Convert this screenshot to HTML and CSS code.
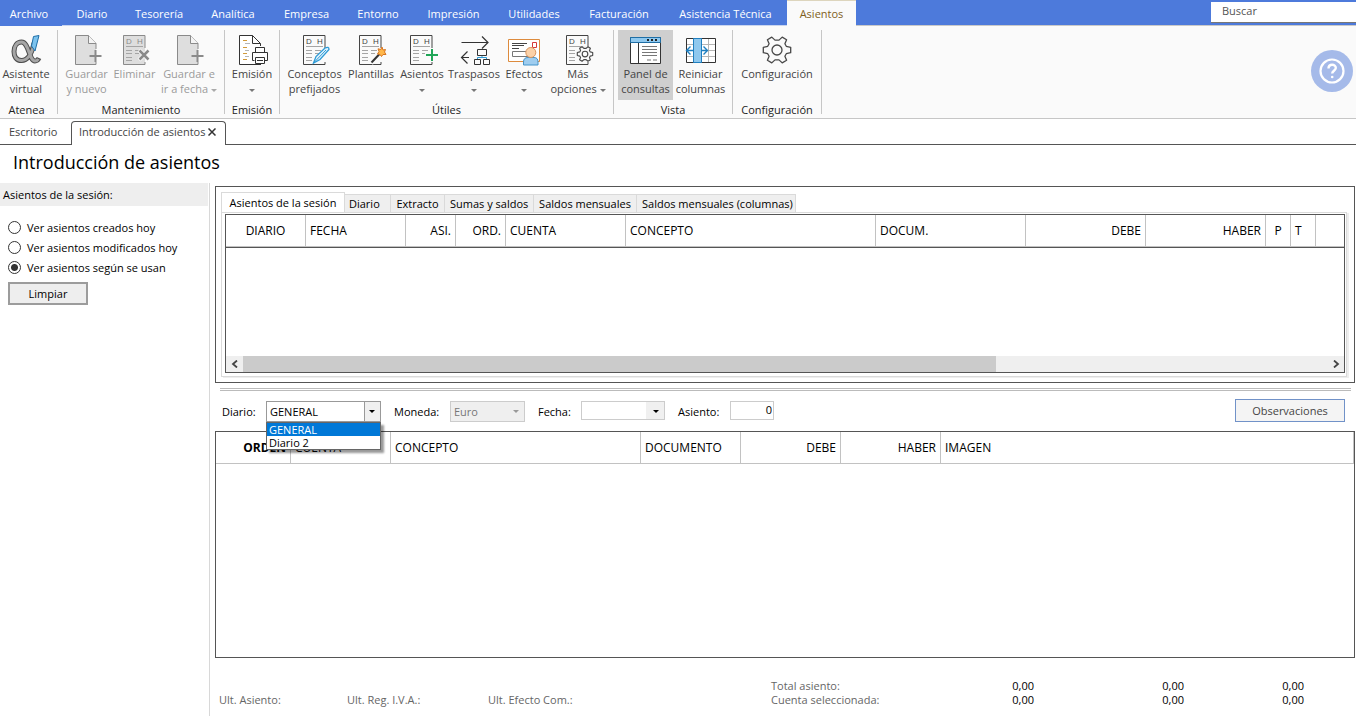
FILE: index.html
```html
<!DOCTYPE html>
<html lang="es">
<head>
<meta charset="utf-8">
<title>Introducción de asientos</title>
<link rel="stylesheet" href="styles.css">
</head>
<body>
<svg class="defs" aria-hidden="true">
  <symbol id="sheet" viewBox="0 0 32 32">
    <path d="M25 15V9.500L17.500 1.500H4.500V30.500H25V28" fill="#dedede" stroke="#8a8a8a"/>
    <path d="M17.500 1.500V9.500H25" fill="#f4f4f4" stroke="#8a8a8a"/>
    <path d="M24.500 16V28M18.500 22H30.500" stroke="#8a8a8a" stroke-width="2"/>
  </symbol>
  <symbol id="ledger" viewBox="0 0 32 32">
    <path d="M26 14V1.500H4.500V30.500H26V28" fill="none" stroke="currentColor"/>
    <text x="7" y="10" class="ledger-text">D</text>
    <text x="18" y="10" class="ledger-text">H</text>
    <path d="M7 12.500H24M7 16.500H13M7 19.500H13M7 23.500H13M7 26.500H13M16 16.500H22M16 19.500H20" fill="none" stroke="#a5a5a5"/>
  </symbol>
  <symbol id="gear" viewBox="-16 -16 32 32">
    <path d="M9.300 3.700L7.900 6.200L9.600 10.200L5.200 12.900L2 9.900H-2L-5.200 12.900L-9.600 10.200L-7.900 6.200L-9.300 3.700L-13.700 2.700V-2.700L-9.300 -3.700L-7.900 -6.200L-9.600 -10.200L-5.200 -12.900L-2 -9.900H2L5.200 -12.900L9.600 -10.200L7.900 -6.200L9.300 -3.700L13.700 -2.700V2.700Z" fill="#fafafa" stroke="#484848" stroke-linejoin="round"/>
    <circle r="5" fill="none" stroke="#484848"/>
  </symbol>
</svg>

<nav class="menu">
  <a class="menu-item file" href="#">Archivo</a>
  <a class="menu-item" href="#">Diario</a>
  <a class="menu-item" href="#">Tesorería</a>
  <a class="menu-item" href="#">Analítica</a>
  <a class="menu-item" href="#">Empresa</a>
  <a class="menu-item" href="#">Entorno</a>
  <a class="menu-item" href="#">Impresión</a>
  <a class="menu-item" href="#">Utilidades</a>
  <a class="menu-item" href="#">Facturación</a>
  <a class="menu-item" href="#">Asistencia Técnica</a>
  <a class="menu-item active" href="#">Asientos</a>
  <div class="search"><input type="text" placeholder="Buscar" aria-label="Buscar"></div>
</nav>

<header class="ribbon">
  <section class="group g-atenea">
    <div class="tools">
      <button class="tool" type="button">
        <svg viewBox="0 0 32 32"><path d="M24 9C22 19 18 26.500 11.500 26.500C6 26.500 4 22 4 17.500C4 12 7 8 11.500 8C19 8 19 27 25 27C27 27 28 26 29 24" fill="none" stroke="#4e4e4e" stroke-width="5"/><path d="M24 9.800C22 19 18 26.500 11.500 26.500C6 26.500 4 22 4 17.500C4 12 7 8 11.500 8C19 8 19 27 25 27C27 27 27.800 26 28.400 25" fill="none" stroke="#a6a6a6" stroke-width="3"/><path d="M23.500 2.500L29 1.500L25 17L21.500 12Z" fill="#7cc3ee" stroke="#1e6fa8"/></svg>
        <span>Asistente<br>virtual</span></button>
    </div>
    <h2>Atenea</h2>
  </section>
  <section class="group g-mant">
    <div class="tools">
      <button class="tool" type="button" disabled><svg><use href="#sheet"/></svg><span>Guardar<br>y nuevo</span></button>
      <button class="tool" type="button" disabled><svg viewBox="0 0 32 32"><path d="M4 1H26V30H4Z" fill="#dedede"/><use href="#ledger" width="32" height="32"/><path d="M20 16L30 26M30 16L20 26" stroke="#fafafa" stroke-width="4"/><path d="M20.500 16.500L29.500 25.500M29.500 16.500L20.500 25.500" stroke="#8a8a8a" stroke-width="2.500"/></svg><span>Eliminar</span></button>
      <button class="tool" type="button" disabled><svg><use href="#sheet"/></svg><span>Guardar e<br>ir a fecha <i class="caret"></i></span></button>
    </div>
    <h2>Mantenimiento</h2>
  </section>
  <section class="group g-emision">
    <div class="tools">
      <button class="tool" type="button"><svg viewBox="0 0 32 32"><path d="M24.500 12V9.500L16.500 1.500H3.500V30.500H25" fill="#fff" stroke="#333"/><path d="M16.500 1.500V9.500H24.500" fill="none" stroke="#333"/><path d="M7 6.500H11M7 13.500H11M7 19.500H11M7 25.500H11" stroke="#d29a3a"/><path d="M9 9.500H14M9 16.500H13M9 22.500H13" stroke="#b5b5b5"/><path d="M19.500 18.500V13.500H28.500V18.500M18.500 26.500H16.500V18.500H31.500V26.500H28.500M19.500 23.500H28.500V29.500H19.500Z" fill="#fff" stroke="#333"/><path d="M21 26.500H27" stroke="#333"/></svg><span>Emisión<br><i class="caret"></i></span></button>
    </div>
    <h2>Emisión</h2>
  </section>
  <section class="group g-utiles">
    <div class="tools">
      <button class="tool" type="button"><svg viewBox="0 0 32 32"><use href="#ledger" width="32" height="32"/><path d="M14.500 29L17 22.500L26 14Q30 12 30 15.500L21 25.500Z" fill="#e2f3fd" stroke="#2e9bd6" stroke-width="1.300"/><path d="M14.500 29L27 16" stroke="#2e9bd6"/></svg><span>Conceptos<br>prefijados</span></button>
      <button class="tool" type="button"><svg viewBox="0 0 32 32"><use href="#ledger" width="32" height="32"/><path d="M16 29L25 19" stroke="#fafafa" stroke-width="5"/><path d="M16.500 28.500L25 19.500" stroke="#333" stroke-width="2"/><path d="M27 13L28 16L30.500 15.500L29.500 18L31 20.500L28 20.500L26.500 22.500L25 20.500L22.500 20L24 17.500L23 14.800L25.800 15.500Z" fill="#ffb74a" stroke="#d87520"/></svg><span>Plantillas</span></button>
      <button class="tool" type="button"><svg viewBox="0 0 32 32"><use href="#ledger" width="32" height="32"/><path d="M26 14V28M19 21H32" stroke="#fafafa" stroke-width="4"/><path d="M26 15V27M20 21H32" stroke="#20a557" stroke-width="2"/></svg><span>Asientos<br><i class="caret"></i></span></button>
      <button class="tool" type="button"><svg viewBox="0 0 32 32"><path d="M3.500 8.500H30M24 2.500L30 8.500L24 14.500M11 23.500H3.500M9.500 17.500L3.500 23.500L9.500 29.500" fill="none" stroke="#333" stroke-width="1.200"/><path d="M24 21V23.500M19.500 25.500V23.500H28.500V25.500" fill="none" stroke="#2e9bd6"/><path d="M19.500 15.500H28.500V21.500H19.500ZM16.500 25.500H22.500V30.500H16.500ZM25.500 25.500H31.500V30.500H25.500Z" fill="#fafafa" stroke="#333"/></svg><span>Traspasos<br><i class="caret"></i></span></button>
      <button class="tool" type="button"><svg viewBox="0 0 32 32"><path d="M.5 5.500H31.500V27.500H.5Z" fill="#fff" stroke="#dd8b3d"/><path d="M4 9.500H19M4 11.500H16M4 14.500H11" stroke="#444"/><path d="M4.500 17.500H20V22.500H4.500Z" fill="none" stroke="#777"/><path d="M24.500 8.500H28.500V13.500H24.500Z" fill="none" stroke="#d5383d"/><path d="M15.500 31V28Q15.500 23.500 20 23.500H26Q30 23.500 30 28V31Z" fill="#9fcdef" stroke="#4594ca"/><circle cx="22.800" cy="18.500" r="5" fill="#fbd1a8" stroke="#d9935b"/></svg><span>Efectos<br><i class="caret"></i></span></button>
      <button class="tool" type="button"><svg viewBox="0 0 32 32"><use href="#ledger" width="32" height="32"/><circle cx="23" cy="20" r="8" fill="#fafafa"/><use href="#gear" x="14" y="11" width="18" height="18" class="small-gear"/></svg><span>Más<br>opciones <i class="caret"></i></span></button>
    </div>
    <h2>Útiles</h2>
  </section>
  <section class="group g-vista">
    <div class="tools">
      <button class="tool pressed" type="button" aria-pressed="true"><svg viewBox="0 0 32 32"><path d="M.5 3.500H30.500V29.500H.5Z" fill="#fff" stroke="#333"/><path d="M.5 3.500H30.500V8.500H.5Z" fill="#8fc8ee" stroke="#1f6ea5"/><path d="M17 6H19M21 6H23M25 6H27" stroke="#222" stroke-width="2"/><path d="M8.500 9V29" stroke="#333"/><path d="M12 12.500H27M12 15.500H27M12 18.500H27M12 21.500H27M17 26H21M23 26H27" stroke="#777"/></svg><span>Panel de<br>consultas</span></button>
      <button class="tool" type="button"><svg viewBox="0 0 32 32"><path d="M1.500 4.500H30.500V28.500H1.500Z" fill="#fff" stroke="#333"/><path d="M2 10.500H30M2 16.500H30M2 22.500H30M23.500 5V28" stroke="#b5b5b5"/><path d="M17 14H22V19H17Z" fill="#fff"/><path d="M8.500 4.500H16.500V28.500H8.500Z" fill="#8fc8ee" stroke="#1f7fc0"/><path d="M8 16.500H2M5.500 12.500L1.500 16.500L5.500 20.500M16 16.500H22M18.500 12.500L22.500 16.500L18.500 20.500" fill="none" stroke="#1f7fc0" stroke-width="1.400"/></svg><span>Reiniciar<br>columnas</span></button>
    </div>
    <h2>Vista</h2>
  </section>
  <section class="group g-config">
    <div class="tools">
      <button class="tool" type="button"><svg class="big-gear"><use href="#gear"/></svg><span>Configuración</span></button>
    </div>
    <h2>Configuración</h2>
  </section>
  <button class="help" type="button" aria-label="Ayuda"><svg viewBox="0 0 42 42"><circle cx="21" cy="21" r="11.500" fill="none" stroke="#fff" stroke-width="2.200"/><path d="M17.500 18.500C17.500 13.500 25 13.800 24.800 18C24.700 20.500 21.200 21 21.200 23.500" fill="none" stroke="#fff" stroke-width="2.400"/><circle cx="21.200" cy="27" r="1.300" fill="#fff"/></svg></button>
</header>

<nav class="doc-tabs">
  <a class="doc-tab" href="#">Escritorio</a>
  <div class="doc-tab current"><a href="#">Introducción de asientos</a><button type="button" aria-label="Cerrar"><svg viewBox="0 0 8 8"><path d="M.5.500L7.500 7.500M7.500.500L.5 7.500" stroke="#333" stroke-width="1.500"/></svg></button></div>
  <div class="doc-rest"></div>
</nav>
<h1>Introducción de asientos</h1>

<main class="workspace">
  <aside class="side">
    <h2>Asientos de la sesión:</h2>
    <div class="options">
      <label><input type="radio" name="ver">Ver asientos creados hoy</label>
      <label><input type="radio" name="ver">Ver asientos modificados hoy</label>
      <label><input type="radio" name="ver" checked>Ver asientos según se usan</label>
      <button class="clear" type="button">Limpiar</button>
    </div>
  </aside>

  <div class="content">
    <section class="queries">
      <div class="query-tabs" role="tablist">
        <button type="button" role="tab" aria-selected="true">Asientos de la sesión</button>
        <button type="button" role="tab">Diario</button>
        <button type="button" role="tab">Extracto</button>
        <button type="button" role="tab">Sumas y saldos</button>
        <button type="button" role="tab">Saldos mensuales</button>
        <button type="button" role="tab">Saldos mensuales (columnas)</button>
      </div>
      <div class="query-pane">
        <div class="query-grid">
          <table>
            <colgroup><col class="w80"><col class="w100"><col class="w50"><col class="w50"><col class="w120"><col class="w250"><col class="w150"><col class="w120"><col class="w120"><col class="w25"><col class="w25"><col></colgroup>
            <thead><tr><th class="mid">DIARIO</th><th>FECHA</th><th class="num">ASI.</th><th class="num">ORD.</th><th>CUENTA</th><th>CONCEPTO</th><th>DOCUM.</th><th class="num">DEBE</th><th class="num">HABER</th><th class="mid">P</th><th>T</th><th></th></tr></thead>
          </table>
          <div class="scrollbar">
            <button type="button" aria-label="Izquierda"><svg viewBox="0 0 8 8"><path d="M6 .5L2 4L6 7.500" fill="none" stroke="#444" stroke-width="1.800"/></svg></button>
            <div class="track"><div class="thumb" style="width: 69.5%"></div></div>
            <button type="button" aria-label="Derecha"><svg viewBox="0 0 8 8"><path d="M2 .5L6 4L2 7.500" fill="none" stroke="#444" stroke-width="1.800"/></svg></button>
          </div>
        </div>
      </div>
    </section>
    <div class="splitter"></div>

    <form class="entry">
      <label class="l-diario" for="diario">Diario:</label>
      <div class="combo diario open">
        <select id="diario"><option>GENERAL</option><option>Diario 2</option></select>
        <ul class="list"><li class="on">GENERAL</li><li>Diario 2</li></ul>
      </div>
      <label class="l-moneda" for="moneda">Moneda:</label>
      <div class="combo moneda"><select id="moneda" disabled><option>Euro</option></select></div>
      <label class="l-fecha" for="fecha">Fecha:</label>
      <div class="combo fecha"><select id="fecha"><option></option></select></div>
      <label class="l-asiento" for="asiento">Asiento:</label>
      <input id="asiento" class="number" type="text" value="0">
      <button class="notes" type="button">Observaciones</button>
    </form>

    <div class="lines">
      <table>
        <colgroup><col class="w75"><col class="w100"><col class="w250"><col class="w100"><col class="w100"><col class="w100"><col></colgroup>
        <thead><tr><th class="num strong">ORDEN</th><th>CUENTA</th><th>CONCEPTO</th><th>DOCUMENTO</th><th class="num">DEBE</th><th class="num">HABER</th><th>IMAGEN</th></tr></thead>
      </table>
    </div>

    <footer class="status">
      <span>Ult. Asiento:</span>
      <span>Ult. Reg. I.V.A.:</span>
      <span>Ult. Efecto Com.:</span>
      <table class="totals">
        <tr><th>Total asiento:</th><td>0,00</td><td>0,00</td><td>0,00</td></tr>
        <tr><th>Cuenta seleccionada:</th><td>0,00</td><td>0,00</td><td>0,00</td></tr>
      </table>
    </footer>
  </div>
</main>
</body>
</html>
```

FILE: styles.css
```css
* { box-sizing: border-box; }
body {
  margin: 0;
  min-height: 100vh;
  display: flex;
  flex-direction: column;
  background: #fff;
  color: #000;
  font: 11px/15px "Open Sans", "Noto Sans", sans-serif;
}
button, input, select { font: inherit; color: inherit; margin: 0; border-radius: 0; }
button { padding: 0; border: 0; background: none; }
a { color: inherit; text-decoration: none; }
h1, h2 { margin: 0; font-weight: 400; }
.defs { display: none; }

/* Menu bar */
.menu {
  display: grid;
  grid-template-columns: 62px 60px 74px 74px 73px 70px 81px 80px 90px 123px 69px 1fr;
  height: 26px;
  background: #4d7adb;
  color: #fff;
}
.menu-item {
  padding-top: 6px;
  text-align: center;
  white-space: nowrap;
  border-bottom: 1px solid #c9d5ef;
}
.menu-item.file { padding-right: 4px; border-bottom: 0; }
.menu-item.active {
  padding-top: 5px;
  background: #fafafa;
  color: #80601c;
  border: 0;
  border-top: 1px solid #ddd5bd;
}
.search {
  display: flex;
  justify-content: flex-end;
  border-bottom: 1px solid #c9c9c9;
}
.search input {
  width: 145px;
  margin-top: 2px;
  height: 21px;
  padding: 0 11px 4px;
  border: 0;
  border-bottom: 1px solid #777;
  background: #fff;
  outline: 0;
}
.search input::placeholder { color: #555; }

/* Ribbon */
.ribbon {
  display: flex;
  height: 93px;
  padding-top: 4px;
  background: #fafafa;
  border-bottom: 1px solid #c6c6c6;
  color: #444;
}
.group {
  display: flex;
  flex-direction: column;
  height: 84px;
  border-right: 1px solid #c6c6c6;
}
.g-atenea { width: 58px; }
.g-atenea .tools { padding-right: 5px; }
.g-atenea h2 { padding-right: 4px; }
.g-mant { width: 167px; }
.g-emision { width: 55px; }
.g-utiles { width: 334px; }
.g-vista { width: 119px; }
.g-config { width: 89px; }
.tools { display: flex; justify-content: center; height: 72px; }
.group h2 { font-size: 11px; line-height: 16px; text-align: center; color: #222; }
.tool {
  display: flex;
  flex-direction: column;
  align-items: center;
  height: 70px;
  padding-top: 4px;
  white-space: nowrap;
}
.tool svg { width: 32px; height: 32px; flex: none; color: #444; }
.tool:disabled { color: #9a9a9a; }
.tool:disabled svg { color: #8a8a8a; }
.tool.pressed { background: #cfcfcf; }
.g-mant .tool:nth-child(1) { width: 53px; }
.g-mant .tool:nth-child(2) { width: 43px; }
.g-mant .tool:nth-child(3) { width: 66px; }
.g-utiles .tool:nth-child(1) { width: 61px; }
.g-utiles .tool:nth-child(2) { width: 52px; }
.g-utiles .tool:nth-child(3) { width: 50px; }
.g-utiles .tool:nth-child(4) { width: 54px; }
.g-utiles .tool:nth-child(5) { width: 46px; }
.g-utiles .tool:nth-child(6) { width: 62px; }
.g-vista .tool { width: 55px; }
.group h2 { padding-top: 2px; }
.ledger-text { font: 8px "Liberation Sans", sans-serif; fill: currentColor; }
.small-gear { stroke-width: 2; }
.big-gear { stroke-width: 1.3; }
.caret {
  display: inline-block;
  vertical-align: middle;
  border: 3px solid transparent;
  border-top-color: #777;
  border-bottom: 0;
}
.tool:disabled .caret { border-top-color: #aaa; }
.help {
  width: 42px;
  height: 42px;
  margin: 20px 3px 0 auto;
  border-radius: 50%;
  background: #a5bae9;
}
.help svg { display: block; }

/* Document tabs */
.doc-tabs { display: flex; height: 26px; color: #444; }
.doc-tab { width: 71px; padding: 5px 9px 0; border-bottom: 1px solid #555; white-space: nowrap; }
.doc-tab.current {
  display: flex;
  align-items: center;
  justify-content: space-between;
  width: 155px;
  margin-top: 2px;
  padding: 0 9px 4px 7px;
  border: 1px solid #555;
  border-bottom: 0;
  border-radius: 4px 4px 0 0;
}
.doc-tab svg { display: block; width: 8px; height: 8px; }
.doc-rest { flex: 1; border-bottom: 1px solid #555; }
h1 { padding: 5px 13px 0; height: 38px; font-size: 18px; line-height: 24px; }

/* Side panel */
.workspace { flex: 1; display: flex; }
.side { width: 210px; border-right: 1px solid #d8d8d8; padding-right: 1px; }
.side h2 { padding: 4px 3px; background: #eee; font-size: 11px; }
.options { display: flex; flex-direction: column; align-items: flex-start; padding: 11px 8px; }
.options label { display: flex; align-items: center; gap: 6px; height: 20px; }
.options input {
  appearance: none;
  width: 13px;
  height: 13px;
  border: 1px solid #333;
  border-radius: 50%;
  background: #fff;
}
.options input:checked { background: radial-gradient(circle, #333 0 3px, #fff 4px); }
.clear { width: 80px; height: 23px; margin-top: 5px; border: 2px solid #9c9c9c; background: #eee; }

/* Query panel */
.content { flex: 1; min-width: 0; display: flex; flex-direction: column; padding: 3px 1px 0 5px; }
.queries { padding: 5px 7px 5px 5px; border: 1px solid #555; }
.query-tabs { display: flex; align-items: flex-end; }
.query-tabs button {
  height: 18px;
  padding: 0 5px;
  background: #efefef;
  border: 1px solid #dadada;
  border-left: 0;
  border-bottom: 0;
  white-space: nowrap;
}
.query-tabs button[aria-selected] {
  width: 124px;
  height: 20px;
  background: #fff;
  border-left: 1px solid #dadada;
}
.query-tabs button:nth-child(2) { width: 46px; padding: 0 12px 0 4px; }
.query-tabs button:nth-child(3) { width: 54px; }
.query-tabs button:nth-child(4) { width: 89px; }
.query-tabs button:nth-child(5) { width: 103px; }
.query-tabs button:nth-child(6) { width: 159px; }
.query-pane { padding: 1px 1px 3px 3px; border: 1px solid #dadada; box-shadow: 2px 1px #eee; }
.query-grid { display: flex; flex-direction: column; height: 159px; border: 1px solid #555; }
table { width: 100%; border-collapse: separate; border-spacing: 0; table-layout: fixed; }
th { padding: 0 4px; font-weight: 400; text-align: left; white-space: nowrap; }
.query-grid th, .lines th {
  height: 32px;
  font-size: 12px;
  border-right: 1px solid #c2c2c2;
  border-bottom: 1px solid #c2c2c2;
}
.query-grid table { border-bottom: 1px solid #555; }
.query-grid th:last-child { border-right: 0; }
th.num { text-align: right; }
th.mid { text-align: center; }
th.strong { font-weight: 700; }
.w25 { width: 25px; }
.w50 { width: 50px; }
.w75 { width: 75px; }
.w80 { width: 80px; }
.w100 { width: 100px; }
.w120 { width: 120px; }
.w150 { width: 150px; }
.w250 { width: 250px; }
.scrollbar { display: flex; height: 16px; margin-top: auto; background: #efefef; }
.scrollbar button { width: 17px; display: grid; place-items: center; }
.scrollbar svg { width: 8px; height: 8px; }
.track { flex: 1; }
.thumb { height: 100%; background: #cbcbcb; }
.splitter { height: 3px; margin: 5px 4px 0 5px; border: 1px solid #bbb; border-width: 1px 0; }

/* Entry form */
.entry { display: flex; align-items: flex-start; padding: 8px 10px 9px 7px; }
.entry label { padding-top: 5px; white-space: nowrap; }
.l-diario { width: 44px; }
.l-moneda, .l-fecha, .l-asiento { margin-left: 13px; }
.l-moneda { width: 56px; }
.l-fecha { width: 43px; }
.l-asiento { width: 52px; }
.combo { position: relative; margin-top: 2px; height: 21px; }
.combo select {
  appearance: none;
  width: 100%;
  height: 100%;
  padding: 0 3px;
  border: 1px solid #ccc;
  background: #fff;
  outline: 0;
}
.combo::after {
  content: "";
  position: absolute;
  right: 6px;
  top: 9px;
  border: 3px solid transparent;
  border-top-color: #000;
  border-bottom: 0;
}
.diario { width: 115px; }
.diario select { border-color: #999; background: linear-gradient(90deg, transparent calc(100% - 16px), #999 0, #999 calc(100% - 15px), #f0f0f0 0); }
.moneda { width: 75px; }
.moneda select { opacity: 1; background: #efefef; color: #777; }
.moneda::after { border-top-color: #999; }
.fecha { width: 84px; height: 19px; }
.fecha select { background: linear-gradient(90deg, transparent calc(100% - 18px), #f0f0f0 0); }
.list {
  position: absolute;
  z-index: 2;
  left: 0;
  top: 21px;
  width: 100%;
  margin: 0;
  padding: 0;
  list-style: none;
  line-height: 13px;
  border: 1px solid #666;
  background: #fff;
  box-shadow: 3px 3px 2px #0006;
}
.list li { padding: 0 2px; }
.list .on { background: #0078d7; color: #fff; }
.number { width: 44px; height: 19px; margin-top: 2px; padding: 0 1px 2px; border: 1px solid #ccc; text-align: right; }
.notes { width: 110px; height: 23px; margin-left: auto; border: 1px solid #7192c8; background: #f4f4f4; color: #444; }

/* Entry lines */
.lines { flex: 1; border: 1px solid #555; }

/* Status */
.status { display: flex; align-items: flex-end; height: 58px; padding: 0 0 9px 4px; color: #666; line-height: 14px; }
.status span:nth-of-type(1) { width: 128px; }
.status span:nth-of-type(2) { width: 141px; }
.totals { width: 533px; margin-left: auto; margin-right: 51px; }
.totals th { padding: 0; }
.totals td { padding: 0; text-align: right; color: #000; }
.totals td:nth-child(2) { width: 150px; }
.totals td:nth-child(3) { width: 150px; }
.totals td:nth-child(4) { width: 120px; }
```
